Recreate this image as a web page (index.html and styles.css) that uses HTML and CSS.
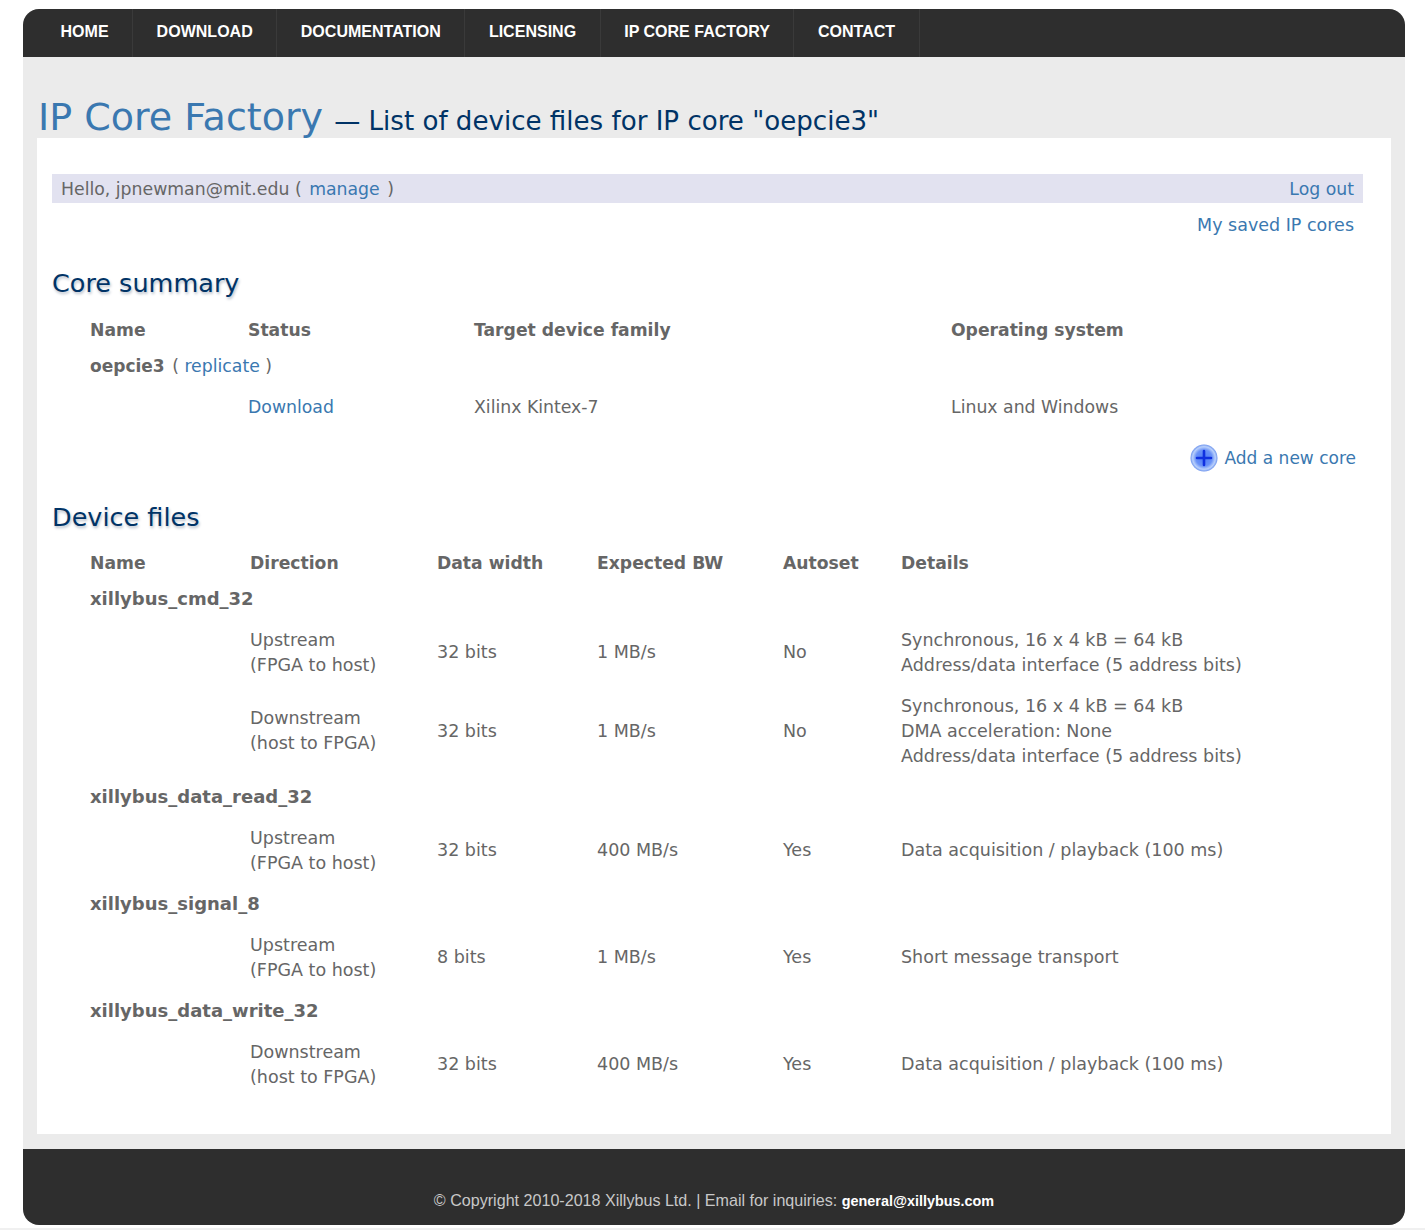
FILE: index.html
```html
<!DOCTYPE html>
<html lang="en">
<head>
    <meta charset="UTF-8">
    <title>IP Core Factory - Xillybus</title>
    <link rel="stylesheet" href="styles.css">
</head>
<body>
    <div class="wrapper">
        <ul class="nav">
            <li><a href="#">Home</a></li>
            <li><a href="#">Download</a></li>
            <li><a href="#">Documentation</a></li>
            <li><a href="#">Licensing</a></li>
            <li><a href="#">IP Core Factory</a></li>
            <li><a href="#">Contact</a></li>
        </ul>

        <h1 class="page-title">IP Core Factory <span>&mdash; List of device files for IP core "oepcie3"</span></h1>

        <div class="content">
            <div class="user-bar">
                <span>Hello, jpnewman@mit.edu ( <a href="#">manage</a> )</span>
                <a href="#">Log out</a>
            </div>
            <div class="saved"><a href="#">My saved IP cores</a></div>

            <h2>Core summary</h2>
            <div class="summary-table">
                <div class="th">Name</div>
                <div class="th">Status</div>
                <div class="th">Target device family</div>
                <div class="th">Operating system</div>
                <div class="core-name"><b>oepcie3</b> ( <a href="#">replicate</a> )</div>
                <div class="empty"></div>
                <div><a href="#">Download</a></div>
                <div>Xilinx Kintex-7</div>
                <div>Linux and Windows</div>
            </div>

            <div class="add-core">
                <svg class="add-icon" width="28" height="28" viewBox="0 0 28 28">
                    <defs>
                        <radialGradient id="plus-bg" cx="50%" cy="50%" r="50%">
                            <stop offset="0%" stop-color="#4f7bf6"/>
                            <stop offset="60%" stop-color="#6a92f7"/>
                            <stop offset="84%" stop-color="#b9d0fb"/>
                            <stop offset="100%" stop-color="#6f95ee"/>
                        </radialGradient>
                    </defs>
                    <circle cx="14" cy="14" r="13.5" fill="url(#plus-bg)"/>
                    <path d="M14 7v14M7 14h14" stroke="#1030e0" stroke-width="2.6" stroke-linecap="round"/>
                </svg>
                <a href="#">Add a new core</a>
            </div>

            <h2 class="device-title">Device files</h2>
            <div class="device-table">
                <div class="th">Name</div>
                <div class="th">Direction</div>
                <div class="th">Data width</div>
                <div class="th">Expected BW</div>
                <div class="th">Autoset</div>
                <div class="th">Details</div>

                <div class="device-name">xillybus_cmd_32</div>
                <div class="dir">Upstream<br>(FPGA to host)</div>
                <div>32 bits</div>
                <div>1 MB/s</div>
                <div>No</div>
                <div>Synchronous, 16 x 4 kB = 64 kB<br>Address/data interface (5 address bits)</div>
                <div class="dir">Downstream<br>(host to FPGA)</div>
                <div>32 bits</div>
                <div>1 MB/s</div>
                <div>No</div>
                <div>Synchronous, 16 x 4 kB = 64 kB<br>DMA acceleration: None<br>Address/data interface (5 address bits)</div>

                <div class="device-name">xillybus_data_read_32</div>
                <div class="dir">Upstream<br>(FPGA to host)</div>
                <div>32 bits</div>
                <div>400 MB/s</div>
                <div>Yes</div>
                <div>Data acquisition / playback (100 ms)</div>

                <div class="device-name">xillybus_signal_8</div>
                <div class="dir">Upstream<br>(FPGA to host)</div>
                <div>8 bits</div>
                <div>1 MB/s</div>
                <div>Yes</div>
                <div>Short message transport</div>

                <div class="device-name">xillybus_data_write_32</div>
                <div class="dir">Downstream<br>(host to FPGA)</div>
                <div>32 bits</div>
                <div>400 MB/s</div>
                <div>Yes</div>
                <div>Data acquisition / playback (100 ms)</div>
            </div>
        </div>

        <div class="footer">
            &copy; Copyright 2010-2018 Xillybus Ltd. | Email for inquiries: <a href="#">general@xillybus.com</a>
        </div>
    </div>
    <div class="page-end"></div>
</body>
</html>
```
FILE: styles.css
```css
* {
    box-sizing: border-box;
}

body {
    margin: 0;
    background: #fff;
    color: #666;
    font-family: 'DejaVu Sans', sans-serif;
    font-size: 17.5px;
    line-height: 25px;
}

a {
    color: #3a78b0;
    text-decoration: none;
}

.wrapper {
    width: 1382px;
    height: 1216px;
    margin: 9px 0 0 23px;
    background: #ebebeb;
    border-radius: 16px;
    overflow: hidden;
}

.nav {
    display: flex;
    height: 48px;
    margin: 0;
    padding: 0 0 0 14px;
    list-style: none;
    background: #2e2e2e;
}

.nav li {
    border-right: 1px solid #3a3a3a;
}

.nav a {
    display: block;
    padding: 0 23.5px;
    color: #fff;
    font-family: 'Liberation Sans', sans-serif;
    font-size: 16.04px;
    font-weight: bold;
    line-height: 45px;
    text-transform: uppercase;
}

.page-title {
    height: 81px;
    margin: 0;
    padding: 36px 0 0 15px;
    color: #3a78b0;
    font-size: 38px;
    font-weight: normal;
    line-height: 48px;
    white-space: nowrap;
}

.page-title span {
    margin-left: -1px;
    color: #003366;
    font-size: 26.1px;
}

.content {
    height: 996px;
    margin: 0 14px;
    padding: 36px 28px 0 15px;
    background: #fff;
}

.user-bar {
    display: flex;
    justify-content: space-between;
    height: 29px;
    padding: 3px 9px;
    background: #e2e2f0;
    font-size: 17.3px;
}

.user-bar span a {
    margin: 0 2px;
}

.saved {
    padding: 10px 9px 0;
    text-align: right;
}

h2 {
    margin: 28px 0 0;
    color: #003366;
    font-size: 25.5px;
    font-weight: normal;
    line-height: 34px;
    text-shadow: 1px 2px 3px #b4bcc8;
}

.th {
    font-size: 17.2px;
    font-weight: bold;
}

.summary-table {
    display: grid;
    grid-template-columns: 158px 226px 477px 1fr;
    margin: 18px 0 0 38px;
    font-size: 17.3px;
}

.summary-table > .th {
    height: 36px;
}

.core-name {
    grid-column: 1 / 5;
    height: 41px;
}

.core-name b {
    margin-right: 2px;
    font-size: 17px;
}

.add-core {
    display: flex;
    align-items: center;
    justify-content: flex-end;
    gap: 6px;
    margin: 24px 7px 0 0;
    font-size: 17px;
}

.device-title {
    margin-top: 28px;
}

.device-table {
    display: grid;
    grid-template-columns: 160px 187px 160px 186px 118px 1fr;
    align-items: center;
    margin: 13.5px 0 0 38px;
}

.device-table > div {
    padding: 8px 0;
}

.device-table > .th {
    padding: 0;
    line-height: 31px;
}

.device-table > .device-name {
    grid-column: 1 / 7;
    padding: 0 0 1px;
    font-size: 18px;
    font-weight: bold;
    line-height: 40px;
}

.dir {
    grid-column: 2;
}

.footer {
    height: 76px;
    margin-top: 15px;
    padding-top: 39px;
    background: #2e2e2e;
    color: #c8c8c8;
    font-family: 'Liberation Sans', sans-serif;
    font-size: 16.1px;
    text-align: center;
}

.footer a {
    color: #fff;
    font-size: 14.4px;
    font-weight: bold;
}

.page-end {
    height: 2px;
    margin-top: 3px;
    background: #f0f0f0;
}
```
